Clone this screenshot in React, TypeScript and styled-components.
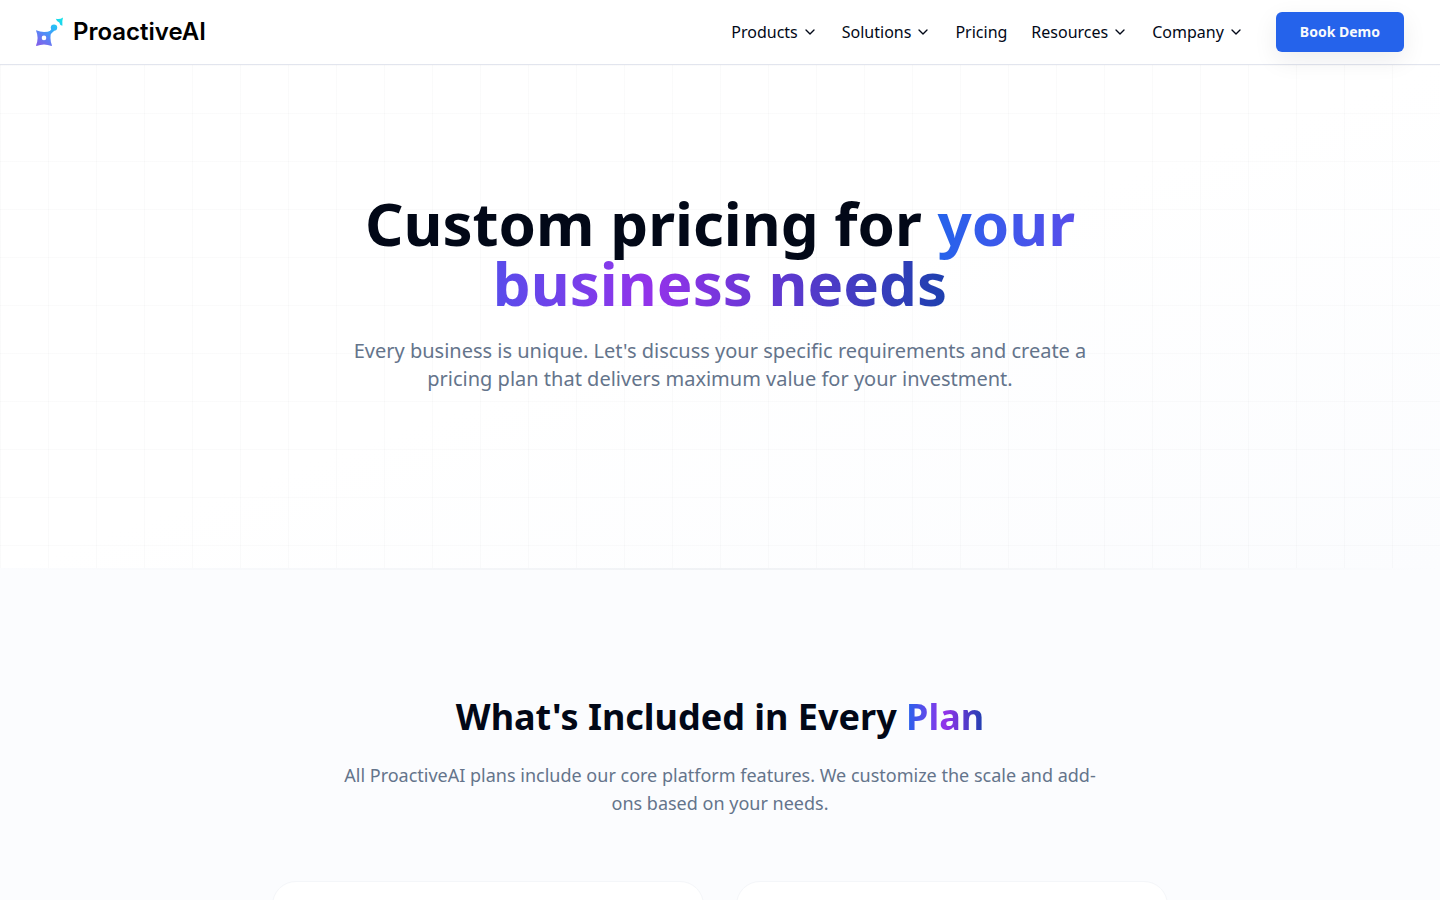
import React from "react";
import styled, { createGlobalStyle } from "styled-components";
import { ChevronDown } from "lucide-react";

const GlobalStyle = createGlobalStyle`
  *, *::before, *::after { box-sizing: border-box; }
  body {
    margin: 0;
    background: #ffffff;
    color: #020817;
    font-family: "Noto Sans", sans-serif;
    font-size: 16px;
    line-height: 24px;
    overflow-x: hidden;
  }
  h1, h2, p { margin: 0; }
`;

const Header = styled.header`
  position: sticky;
  top: 0;
  z-index: 10;
  display: flex;
  align-items: center;
  justify-content: space-between;
  height: 65px;
  padding: 0 36px;
  background: #ffffff;
  border-bottom: 1px solid #e2e5ee;
`;

const Brand = styled.a`
  display: flex;
  align-items: center;
  gap: 9px;
  color: #000000;
  text-decoration: none;
  font-family: Inter, sans-serif;
  font-size: 24px;
  font-weight: 600;
  line-height: 32px;
`;

const Nav = styled.nav`
  display: flex;
  align-items: center;
  gap: 24px;
`;

const NavButton = styled.button`
  display: flex;
  align-items: center;
  gap: 4px;
  padding: 0;
  border: 0;
  background: none;
  color: inherit;
  font: inherit;
  cursor: pointer;
`;

const NavLink = styled.a`
  color: inherit;
  text-decoration: none;
`;

const DemoButton = styled.button`
  height: 40px;
  margin-left: 8px;
  padding: 0 24px;
  border: 0;
  border-radius: 6px;
  background: #2563eb;
  color: #f8fafc;
  font: inherit;
  font-size: 14px;
  font-weight: 700;
  cursor: pointer;
  box-shadow: 0 8px 24px rgba(15, 23, 42, 0.08);
`;

const Hero = styled.section`
  padding: 128px 24px 176px;
  text-align: center;
  background:
    linear-gradient(to right, rgba(15, 23, 42, 0.02) 1px, transparent 1px) 0 0 / 48px 48px,
    linear-gradient(to bottom, rgba(15, 23, 42, 0.02) 1px, transparent 1px) 0 0 / 48px 48px,
    linear-gradient(to bottom right, #ffffff 50%, #fbfcfe);
`;

const HeroTitle = styled.h1`
  max-width: 768px;
  margin: 0 auto;
  font-size: 60px;
  line-height: 60px;
  font-weight: 700;
`;

const GradientText = styled.span`
  background: linear-gradient(to right, #2563eb, #9333ea, #1e40af);
  background-clip: text;
  -webkit-background-clip: text;
  color: transparent;
`;

const Lead = styled.p<{ $large?: boolean }>`
  max-width: 768px;
  margin: 24px auto 0;
  color: #64748b;
  font-size: ${({ $large }) => ($large ? 20 : 18)}px;
  line-height: 28px;
`;

const Divider = styled.div`
  height: 2px;
  margin-top: -1px;
  background: linear-gradient(to right, #fbfcfe, #f0f2f5 50%, #fbfcfe);
`;

const Included = styled.section`
  padding: 127px 24px 128px;
  text-align: center;
  background: #fbfcfe;
`;

const SectionTitle = styled.h2`
  font-size: 36px;
  line-height: 40px;
  font-weight: 700;
`;

const CardGrid = styled.div`
  display: grid;
  grid-template-columns: repeat(2, 1fr);
  gap: 32px;
  max-width: 896px;
  margin: 64px auto 0;
`;

const Card = styled.div`
  min-height: 280px;
  border: 1px solid #f4f6f9;
  border-radius: 24px;
  background: #ffffff;
`;

const LogoMark = () => (
  <svg width="28" height="30" viewBox="0 0 28 30" aria-hidden="true">
    <defs>
      <linearGradient id="mark" gradientUnits="userSpaceOnUse" x1="5" y1="29" x2="24" y2="2">
        <stop offset="0" stopColor="#7f62ea" />
        <stop offset="0.3" stopColor="#5c82f5" />
        <stop offset="0.6" stopColor="#32b0fa" />
        <stop offset="1" stopColor="#15e0e8" />
      </linearGradient>
    </defs>
    <g fill="url(#mark)">
      <path
        fillRule="evenodd"
        d="M0.2 13.2Q8 16.500 15.2 13.4L15.8 14Q13 21 16 28.600L15.500 29Q8 26 0.500 29L0 28.500Q3.200 21 0 13.600ZM8 18.600A2.300 2.300 0 1 0 8 23.200A2.300 2.300 0 1 0 8 18.600Z"
      />
      <circle cx="18" cy="10.600" r="3.200" />
      <path d="M16 11.600L18.500 13.500L14.800 17L13 15.200Z" />
      <path d="M19.800 1.800Q23.800 2.800 27 0.600Q25.800 4.500 26.400 8.700Q23.600 8 23.300 5.500Q20.800 5 19.800 1.800Z" />
    </g>
  </svg>
);

const MenuItem = ({ label }: { label: string }) => (
  <NavButton type="button" aria-haspopup="true">
    {label}
    <ChevronDown size={16} aria-hidden="true" />
  </NavButton>
);

export default function App() {
  return (
    <>
      <GlobalStyle />
      <Header>
        <Brand href="#">
          <LogoMark />
          ProactiveAI
        </Brand>
        <Nav>
          <MenuItem label="Products" />
          <MenuItem label="Solutions" />
          <NavLink href="#pricing">Pricing</NavLink>
          <MenuItem label="Resources" />
          <MenuItem label="Company" />
          <DemoButton type="button">Book Demo</DemoButton>
        </Nav>
      </Header>
      <main>
        <Hero>
          <HeroTitle>
            Custom pricing for <GradientText>your business needs</GradientText>
          </HeroTitle>
          <Lead $large>
            Every business is unique. Let's discuss your specific requirements and create a pricing
            plan that delivers maximum value for your investment.
          </Lead>
        </Hero>
        <Divider />
        <Included>
          <SectionTitle>
            What's Included in Every <GradientText>Plan</GradientText>
          </SectionTitle>
          <Lead>
            All ProactiveAI plans include our core platform features. We customize the scale and
            add-ons based on your needs.
          </Lead>
          <CardGrid>
            <Card />
            <Card />
          </CardGrid>
        </Included>
      </main>
    </>
  );
}
